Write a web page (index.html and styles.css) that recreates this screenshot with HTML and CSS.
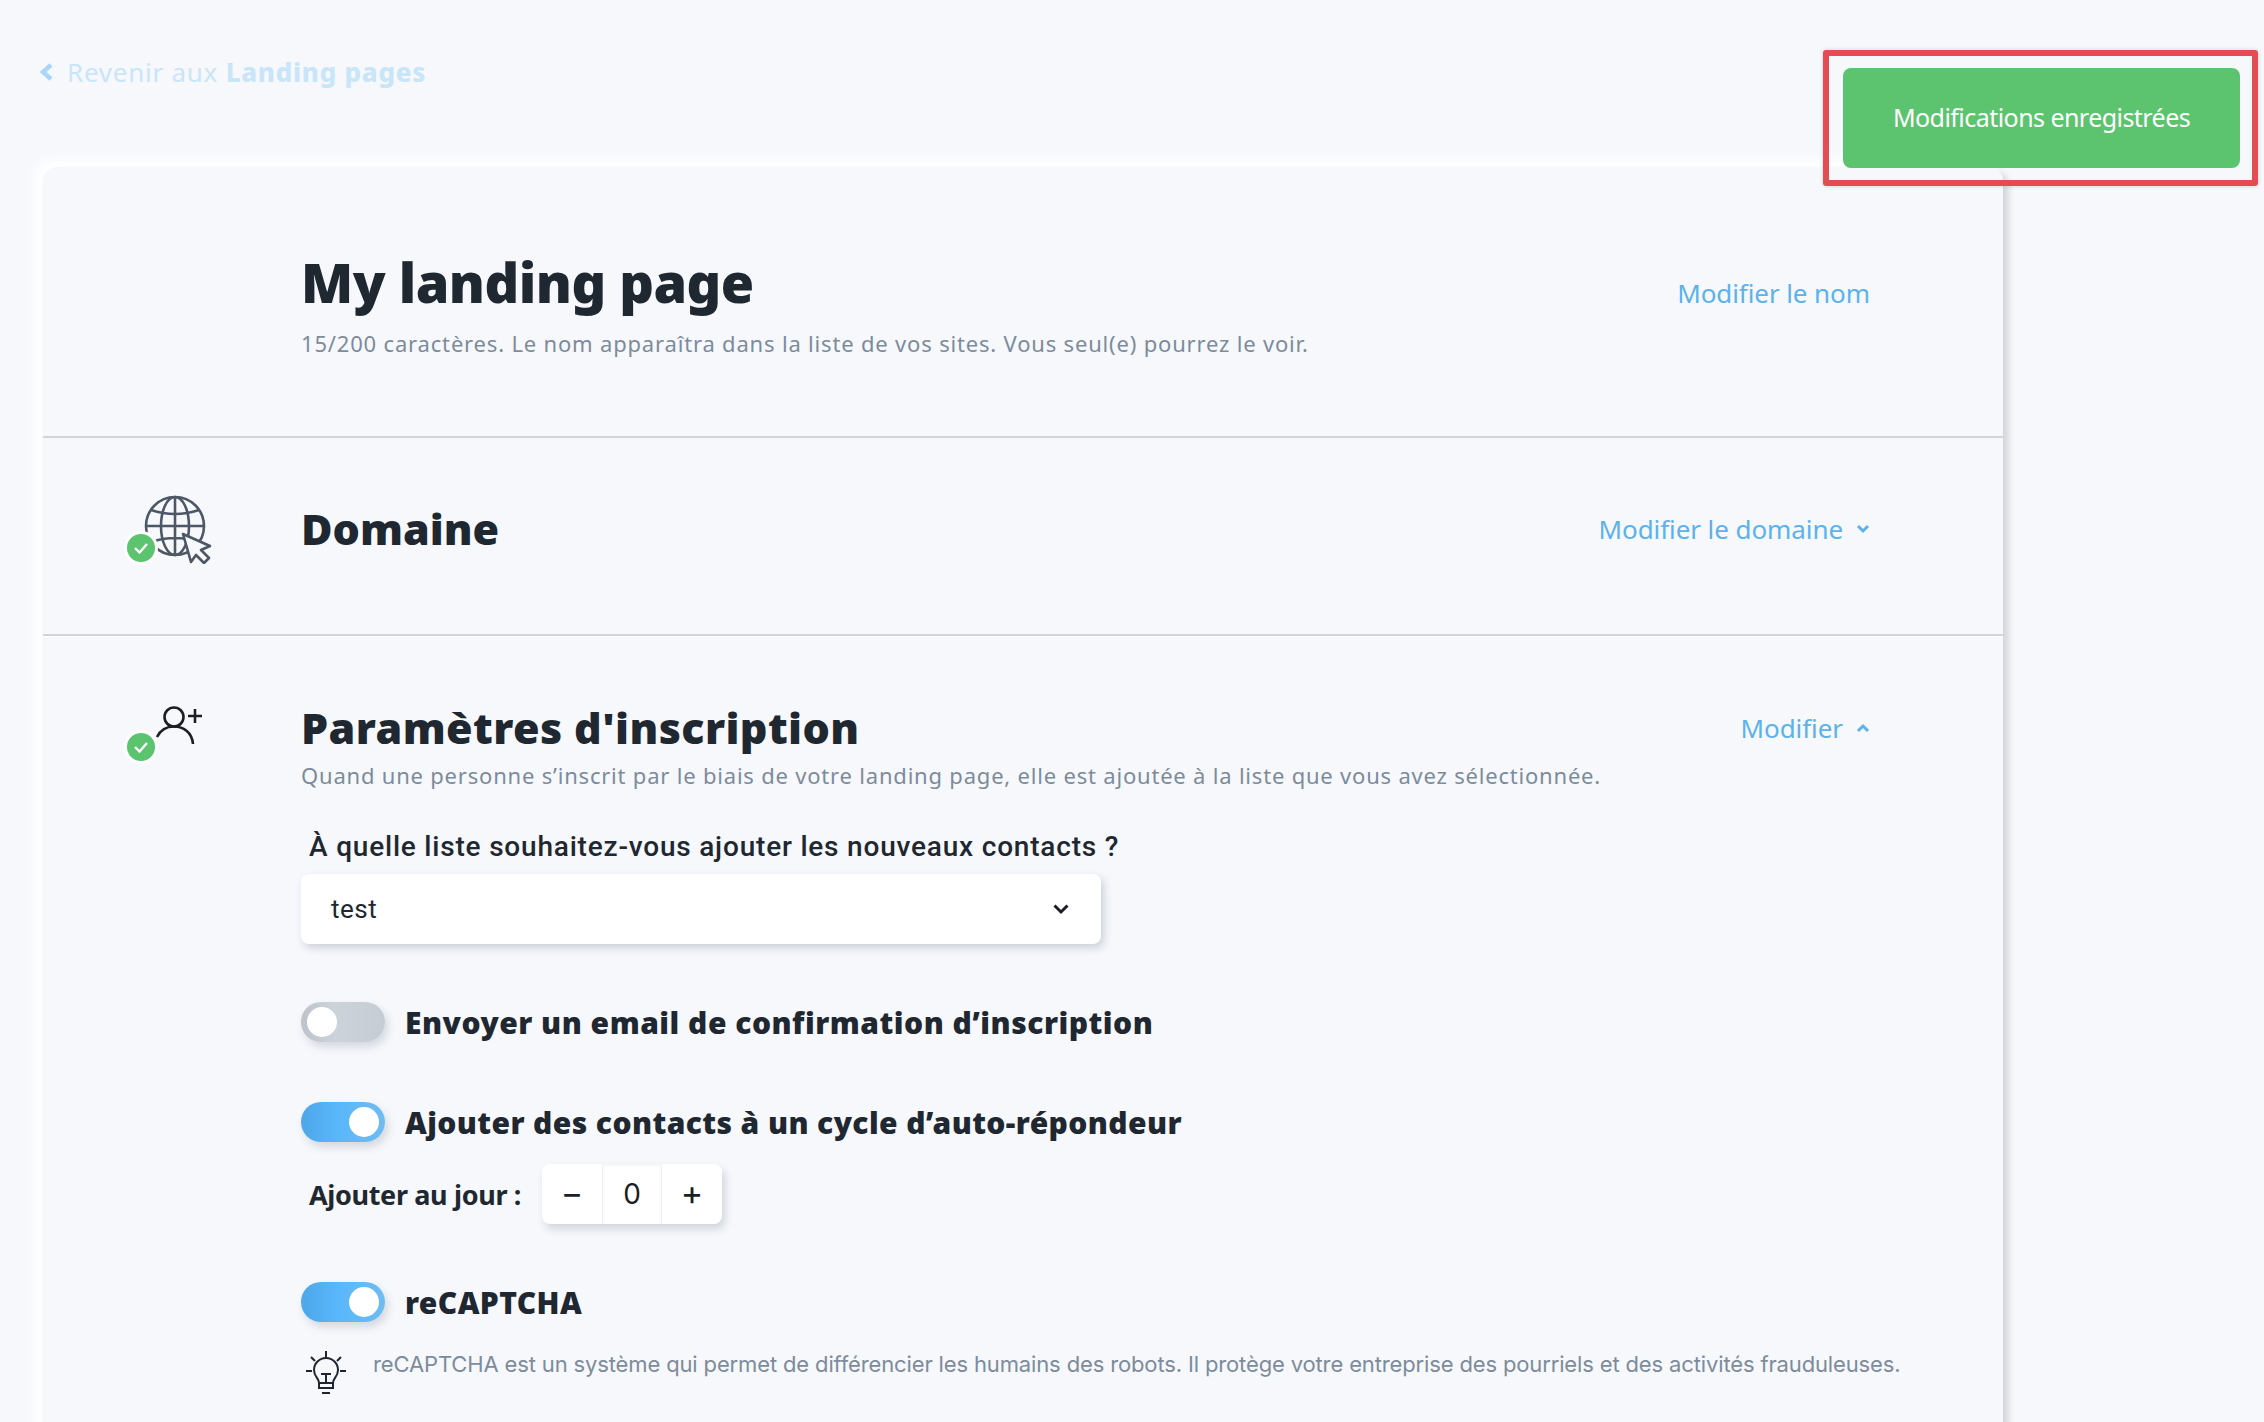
FILE: index.html
```html
<!DOCTYPE html>
<html lang="fr">
<head>
  <meta charset="UTF-8" />
  <meta name="viewport" content="width=device-width, initial-scale=1" />
  <title>My landing page</title>
  <link rel="stylesheet" href="styles.css">
</head>
<body>

  <div class="top">
    <a class="back" href="#">
      <svg class="back-icon" width="15" height="20" viewBox="0 0 15 20"><path d="M12 3 L4 10 L12 17" fill="none" stroke="#a9d8f7" stroke-width="4.5"/></svg>
      <span>Revenir aux <b>Landing pages</b></span>
    </a>
  </div>

  <div class="toast-frame">
    <div class="toast">Modifications enregistrées</div>
  </div>

  <div class="card">

    <div class="section section-name">
      <div class="icon-col"></div>
      <div class="main">
        <h1>My landing page</h1>
        <p class="hint">15/200 caractères. Le nom apparaîtra dans la liste de vos sites. Vous seul(e) pourrez le voir.</p>
      </div>
      <a class="action" href="#">Modifier le nom</a>
    </div>

    <div class="section section-domain">
      <div class="icon-col">
        <div class="icon-wrap">
          <svg width="90" height="70" viewBox="0 0 90 70" fill="none" stroke="#4d5766" stroke-width="2.6">
            <circle cx="50" cy="32" r="29"/>
            <ellipse cx="50" cy="32" rx="14" ry="29"/>
            <path d="M50 3 V61 M21 32 H79 M26 16 Q50 24 74 16 M26 48 Q50 40 74 48"/>
            <path d="M58 40 L85 52 L76 56 L84 64 L79 69 L71 61 L66 68 Z" fill="#f6f8fc" stroke-linejoin="round" stroke-width="2.6"/>
          </svg>
          <span class="badge"><svg width="16" height="14" viewBox="0 0 16 14"><path d="M2 7 L6.5 11.5 L14 3" fill="none" stroke="#fff" stroke-width="2.4"/></svg></span>
        </div>
      </div>
      <div class="main">
        <h2>Domaine</h2>
      </div>
      <a class="action" href="#">Modifier le domaine
        <svg class="chev" width="14" height="10" viewBox="0 0 14 10"><path d="M2 2 L7 7 L12 2" fill="none" stroke="#5db2ea" stroke-width="3"/></svg>
      </a>
    </div>

    <div class="section section-signup">
      <div class="icon-col">
        <div class="icon-wrap">
          <svg width="90" height="70" viewBox="0 0 90 70" fill="none" stroke="#1b1f24" stroke-width="2.6">
            <circle cx="48" cy="14" r="9.5"/>
            <path d="M31 34 C35 26 42 23.500 48 23.500 C57 23.500 66 29 67 41"/>
            <path d="M62 13 H76 M69 6 V20"/>
          </svg>
          <span class="badge badge-user"><svg width="16" height="14" viewBox="0 0 16 14"><path d="M2 7 L6.5 11.500 L14 3" fill="none" stroke="#fff" stroke-width="2.4"/></svg></span>
        </div>
      </div>
      <div class="main">
        <h2>Paramètres d'inscription</h2>
        <p class="hint hint-tight">Quand une personne s’inscrit par le biais de votre landing page, elle est ajoutée à la liste que vous avez sélectionnée.</p>

        <label class="field-label">À quelle liste souhaitez-vous ajouter les nouveaux contacts ?</label>
        <div class="select">
          <span>test</span>
          <svg width="18" height="12" viewBox="0 0 18 12"><path d="M2.500 2.500 L9 9 L15.500 2.500" fill="none" stroke="#1b1f24" stroke-width="3"/></svg>
        </div>

        <div class="toggle-row row-email">
          <span class="toggle"><span class="knob"></span></span>
          <span class="toggle-label">Envoyer un email de confirmation d’inscription</span>
        </div>

        <div class="toggle-row row-cycle">
          <span class="toggle on"><span class="knob"></span></span>
          <span class="toggle-label">Ajouter des contacts à un cycle d’auto-répondeur</span>
        </div>

        <div class="day-row">
          <span class="day-label">Ajouter au jour :</span>
          <div class="stepper">
            <span class="step step-sign">−</span>
            <span class="step step-value">0</span>
            <span class="step step-sign">+</span>
          </div>
        </div>

        <div class="toggle-row row-captcha">
          <span class="toggle on"><span class="knob"></span></span>
          <span class="toggle-label">reCAPTCHA</span>
        </div>

        <div class="tip">
          <svg class="tip-icon" width="42" height="44" viewBox="0 0 42 44" fill="none" stroke="#1f2530" stroke-width="2">
            <path d="M21 1 V8 M6 7 L10 11 M36 7 L32 11 M1 21 H7 M35 21 H41"/>
            <path d="M14 33 C14 28 9 27 9 20 A12 12 0 0 1 33 20 C33 27 28 28 28 33 V38 H14 Z"/>
            <path d="M16 24 H26 M21 24 V33 M14 33 H28 M17 43 H25"/>
          </svg>
          <p>reCAPTCHA est un système qui permet de différencier les humains des robots. Il protège votre entreprise des pourriels et des activités frauduleuses.</p>
        </div>
      </div>
      <a class="action" href="#">Modifier
        <svg class="chev" width="14" height="10" viewBox="0 0 14 10"><path d="M2 8 L7 3 L12 8" fill="none" stroke="#5db2ea" stroke-width="3"/></svg>
      </a>
    </div>

  </div>

</body>
</html>
```

FILE: styles.css
```css
html, body {
  margin: 0;
  padding: 0;
  height: 100%;
  overflow: hidden;
}

body {
  background-color: #f6f8fc;
  font-family: 'Noto Sans', sans-serif;
  color: #1f2731;
  position: relative;
}

a {
  text-decoration: none;
}

.top {
  height: 167px;
  box-sizing: border-box;
  padding: 52px 0 0 39px;
}

.back {
  display: inline-flex;
  align-items: center;
  gap: 13px;
  color: #c9e5f8;
  font-size: 26px;
  line-height: 40px;
  letter-spacing: 0.75px;
}

.back b {
  font-weight: 800;
}

.toast-frame {
  position: absolute;
  top: 50px;
  left: 1823px;
  width: 435px;
  height: 136px;
  box-sizing: border-box;
  border: 6px solid #e54b52;
  border-radius: 3px;
  padding: 12px 12px 12px 14px;
  box-shadow: 0 0 4px rgba(0, 0, 0, 0.15);
  z-index: 5;
}

.toast {
  height: 100%;
  padding-bottom: 2px;
  box-sizing: border-box;
  background-color: #5cc46f;
  border-radius: 8px;
  color: #fff;
  font-size: 25px;
  letter-spacing: -0.55px;
  display: flex;
  align-items: center;
  justify-content: center;
}

.card {
  margin-left: 43px;
  width: 1960px;
  height: 1400px;
  border-radius: 14px;
  background-color: #f6f8fc;
  box-shadow: 5px 5px 7px rgba(60, 60, 70, 0.2), -8px -8px 14px #fff;
}

.section {
  display: grid;
  grid-template-columns: 258px minmax(0, 1fr) auto;
  padding-right: 133px;
  box-sizing: border-box;
}

.section-name {
  height: 271px;
  padding-top: 79px;
  border-bottom: 2px solid #d0d3d8;
}

.section-domain {
  height: 198px;
  padding-bottom: 14px;
  align-items: center;
  border-bottom: 2px solid #d0d3d8;
  box-shadow: 0 1px 0 #fff;
}

.section-domain h2 {
  letter-spacing: 0;
}

.section-signup {
  padding-top: 67px;
}

h1 {
  margin: 0;
  font-size: 54px;
  line-height: 72px;
  font-weight: 900;
  letter-spacing: -0.5px;
}

h2 {
  margin: 0;
  font-size: 43px;
  line-height: 50px;
  font-weight: 900;
  letter-spacing: 0.4px;
}

.hint {
  margin: 10px 0 0 0;
  color: #7d8b9b;
  font-size: 22px;
  line-height: 30px;
  letter-spacing: 0.82px;
}

.hint-tight {
  margin-top: 7px;
  letter-spacing: 0.8px;
}

.action {
  color: #5db2ea;
  font-size: 26px;
  line-height: 38px;
  letter-spacing: -0.08px;
  display: flex;
  align-items: center;
  gap: 13px;
  white-space: nowrap;
}

.section-name .action {
  margin-top: 28px;
  align-self: start;
}

.section-signup .action {
  margin-top: 6px;
  align-self: start;
}

.icon-wrap {
  position: relative;
  width: 90px;
  height: 70px;
  margin-left: 83px;
}

.section-domain .icon-wrap {
  margin-left: 82px;
}

.badge {
  position: absolute;
  left: -1px;
  top: 37px;
  width: 28px;
  height: 28px;
  background-color: #5cc46f;
  border: 3px solid #fff;
  border-radius: 50%;
  display: flex;
  align-items: center;
  justify-content: center;
}

.badge-user {
  left: -2px;
  top: 27px;
}

.field-label {
  display: block;
  margin: 39px 0 0 8px;
  font-family: Roboto, sans-serif;
  font-weight: 500;
  font-size: 28px;
  line-height: 36px;
  letter-spacing: 0.8px;
}

.select {
  margin-top: 9px;
  width: 800px;
  height: 70px;
  box-sizing: border-box;
  padding: 0 31px 0 30px;
  background-color: #fff;
  border-radius: 8px;
  box-shadow: 3px 4px 8px rgba(60, 70, 90, 0.22);
  display: flex;
  align-items: center;
  justify-content: space-between;
  font-family: Roboto, sans-serif;
  font-size: 26px;
  letter-spacing: 0.5px;
}

.toggle-row {
  display: flex;
  align-items: center;
  gap: 20px;
  height: 40px;
}

.row-email {
  margin-top: 58px;
}

.row-email .toggle-label {
  letter-spacing: 0.5px;
}

.row-cycle {
  margin-top: 60px;
}

.row-captcha {
  margin-top: 58px;
}

.toggle {
  width: 84px;
  height: 40px;
  flex: none;
  box-sizing: border-box;
  padding: 5px 6px;
  border-radius: 20px;
  background: linear-gradient(90deg, #bcc3cb, #cdd3da 40%, #c6ccd4);
  box-shadow: 3px 5px 8px rgba(60, 70, 90, 0.18);
  display: flex;
  justify-content: flex-start;
}

.toggle.on {
  background: linear-gradient(90deg, #4da7e8, #59b7fb 45%, #6fbcf0);
  justify-content: flex-end;
}

.knob {
  width: 30px;
  height: 30px;
  border-radius: 50%;
  background-color: #fff;
}

.toggle-label {
  font-size: 30px;
  font-weight: 900;
  letter-spacing: 0.4px;
  line-height: 40px;
  padding-top: 2px;
}

.day-row {
  display: flex;
  align-items: center;
  margin: 22px 0 0 8px;
  height: 60px;
  gap: 21px;
}

.day-label {
  font-size: 27px;
  font-weight: 700;
  letter-spacing: -0.35px;
}

.stepper {
  display: flex;
  height: 60px;
  border-radius: 8px;
  background-color: #fff;
  box-shadow: 3px 5px 9px rgba(60, 70, 90, 0.2);
}

.step {
  width: 60px;
  display: flex;
  align-items: center;
  justify-content: center;
  font-family: Inter, sans-serif;
  font-size: 28px;
  color: #1b1f24;
}

.step-sign {
  font-size: 34px;
  padding-bottom: 3px;
  box-sizing: border-box;
}

.step-value {
  border-left: 1px solid #eef0f3;
  border-right: 1px solid #eef0f3;
  box-shadow: inset 0 2px 3px rgba(60, 70, 90, 0.05);
  box-sizing: border-box;
}

.tip {
  display: flex;
  align-items: flex-start;
  gap: 26px;
  margin: 28px 0 0 4px;
}

.tip-icon {
  flex: none;
}

.tip p {
  margin: 1px 0 0 0;
  white-space: nowrap;
  font-family: Inter, sans-serif;
  font-size: 22px;
  line-height: 26px;
  letter-spacing: -0.14px;
  color: #7d8b9b;
}
```
